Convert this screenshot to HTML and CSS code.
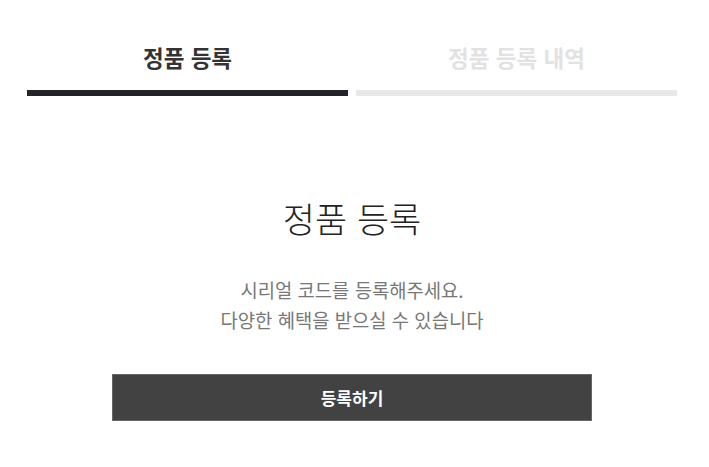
FILE: index.html
```html
<!DOCTYPE html>
<html lang="ko">

<head>
  <meta charset="UTF-8">
  <meta name="viewport" content="width=device-width, initial-scale=1.0">
  <title>정품 등록</title>
  <link rel="stylesheet" href="styles.css">
</head>

<body>
  <div class="wrap">
    <div class="tabs">
      <a class="tab active" href="#">정품 등록</a>
      <a class="tab" href="#">정품 등록 내역</a>
    </div>

    <div class="register">
      <h2>정품 등록</h2>
      <p class="desc">시리얼 코드를 등록해주세요.<br>다양한 혜택을 받으실 수 있습니다</p>
      <button class="btn">등록하기</button>
    </div>
  </div>
</body>

</html>
```

FILE: styles.css
```css
body {
  font-family: "Noto Sans CJK KR", "Noto Sans", sans-serif;
  background-color: #fff;
  margin: 0;
  padding: 0;
}

.wrap {
  width: 650px;
  margin-left: 27px;
}

.tabs {
  display: flex;
  gap: 8px;
}

.tab {
  flex: 1;
  display: block;
  text-align: center;
  text-decoration: none;
  font-size: 22.5px;
  font-weight: bold;
  line-height: 34px;
  padding: 40px 0 16px;
  color: #e2e2e2;
  border-bottom: 6px solid #e8e8e8;
}

.tab.active {
  color: #333;
  border-bottom-color: #232328;
}

.register {
  text-align: center;
}

h2 {
  margin: 98px 0 0;
  font-size: 35px;
  font-weight: 300;
  line-height: 48px;
  color: #222;
}

.desc {
  margin: 33px 0 0;
  font-size: 18.8px;
  line-height: 30px;
  color: #777;
}

.btn {
  display: block;
  width: 480px;
  height: 47px;
  margin: 39px auto 0;
  padding: 0;
  border: 1px solid #666;
  background-color: #424242;
  color: #fff;
  font-family: inherit;
  font-size: 17px;
  font-weight: bold;
  cursor: pointer;
}
```
